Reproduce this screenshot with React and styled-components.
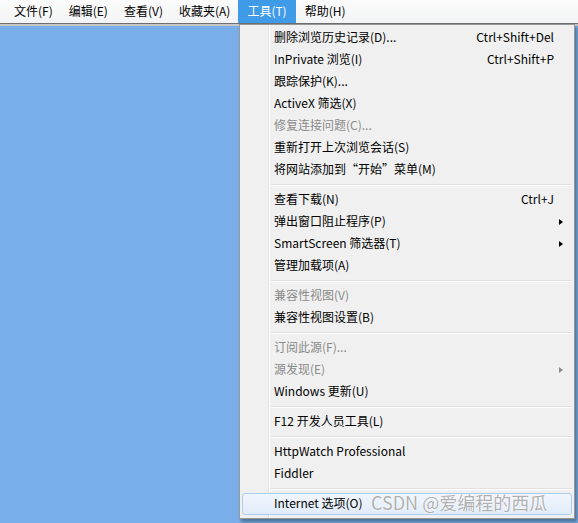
import styled, { createGlobalStyle } from "styled-components"

const Global = createGlobalStyle`
    html, body {
        margin: 0;
        padding: 0;
        background: #7aaee8;
        font-family: "Noto Sans CJK SC", "Noto Sans", sans-serif;
    }
`;

const Page = styled.div`
    position: relative;
    width: 578px;
    height: 523px;
    overflow: hidden;
    background: #7aaee8;
`;

const MenuBar = styled.div`
    display: flex;
    align-items: center;
    height: 23px;
    padding-left: 6px;
    background: linear-gradient(#fbfbfb, #f3f4f5);
    border-bottom: 1px solid #6e6e6e;
    box-shadow: 0 2px 0 #c6c6c6;
`;

const BarItem = styled.div`
    height: 23px;
    line-height: 22px;
    padding: 0 ${p => (p.$open ? "9px" : "8px")};
    margin-right: ${p => (p.$open ? "1px" : "0")};
    font-size: 12px;
    color: ${p => (p.$open ? "#fff" : "#000")};
    background: ${p => (p.$open ? "#3f9ae8" : "transparent")};
`;

const Dropdown = styled.div`
    position: absolute;
    left: 239px;
    top: 24px;
    width: 334px;
    padding: 2px 0 3px 0;
    border: 1px solid #979797;
    background: linear-gradient(to right, #f0f0f0 28px, #e2e3e3 28px, #e2e3e3 29px, #ffffff 29px, #ffffff 30px, #f0f0f0 30px);
    box-shadow: 2px 3px 3px rgba(0, 0, 0, 0.35);
`;

const Item = styled.div`
    position: relative;
    display: flex;
    align-items: center;
    justify-content: space-between;
    height: 22px;
    margin: 0 2px;
    padding: 0 17px 3px 31px;
    box-sizing: border-box;
    font-size: 12px;
    color: ${p => (p.$disabled ? "#8a8a8a" : "#000")};
    border: 1px solid ${p => (p.$hover ? "#aacdf1" : "transparent")};
    border-radius: 3px;
    background: ${p => (p.$hover ? "linear-gradient(#f0f6fd, #e1ecfa)" : "transparent")};
`;

const Shortcut = styled.span`
    font-size: 12px;
`;

const Arrow = styled.span`
    position: absolute;
    right: 8px;
    top: 7px;
    width: 0;
    height: 0;
    border-top: 3.5px solid transparent;
    border-bottom: 3.5px solid transparent;
    border-left: 4px solid ${p => (p.$disabled ? "#8a8a8a" : "#000")};
`;

const Separator = styled.div`
    height: 8px;
    margin-left: 31px;
    margin-right: 2px;
    display: flex;
    flex-direction: column;
    justify-content: center;
    &::before {
        content: "";
        display: block;
        border-top: 1px solid #e0e0e0;
        border-bottom: 1px solid #ffffff;
    }
`;

const Watermark = styled.div`
    position: absolute;
    left: 371px;
    top: 489px;
    font-size: 18px;
    color: rgba(150, 150, 150, 0.75);
    text-shadow: 0 0 2px #fff, 0 0 1px #fff;
    white-space: nowrap;
`;

const barItems = ["文件(F)", "编辑(E)", "查看(V)", "收藏夹(A)", "工具(T)", "帮助(H)"];

const groups = [
    [
        { label: "删除浏览历史记录(D)...", key: "Ctrl+Shift+Del" },
        { label: "InPrivate 浏览(I)", key: "Ctrl+Shift+P" },
        { label: "跟踪保护(K)..." },
        { label: "ActiveX 筛选(X)" },
        { label: "修复连接问题(C)...", disabled: true },
        { label: "重新打开上次浏览会话(S)" },
        { label: "将网站添加到“开始”菜单(M)" },
    ],
    [
        { label: "查看下载(N)", key: "Ctrl+J" },
        { label: "弹出窗口阻止程序(P)", sub: true },
        { label: "SmartScreen 筛选器(T)", sub: true },
        { label: "管理加载项(A)" },
    ],
    [
        { label: "兼容性视图(V)", disabled: true },
        { label: "兼容性视图设置(B)" },
    ],
    [
        { label: "订阅此源(F)...", disabled: true },
        { label: "源发现(E)", disabled: true, sub: true },
        { label: "Windows 更新(U)" },
    ],
    [{ label: "F12 开发人员工具(L)" }],
    [{ label: "HttpWatch Professional" }, { label: "Fiddler" }],
    [{ label: "Internet 选项(O)", hover: true }],
];

const App = () => {
    return (
        <Page>
            <Global />
            <MenuBar>
                {barItems.map(b => (
                    <BarItem key={b} $open={b === "工具(T)"}>{b}</BarItem>
                ))}
            </MenuBar>
            <Dropdown>
                {groups.map((g, gi) => (
                    <div key={gi}>
                        {gi > 0 && <Separator />}
                        {g.map(it => (
                            <Item key={it.label} $disabled={it.disabled} $hover={it.hover}>
                                <span>{it.label}</span>
                                {it.key && <Shortcut>{it.key}</Shortcut>}
                                {it.sub && <Arrow $disabled={it.disabled} />}
                            </Item>
                        ))}
                    </div>
                ))}
            </Dropdown>
            <Watermark>CSDN @爱编程的西瓜</Watermark>
        </Page>
    )
}

export default App;
